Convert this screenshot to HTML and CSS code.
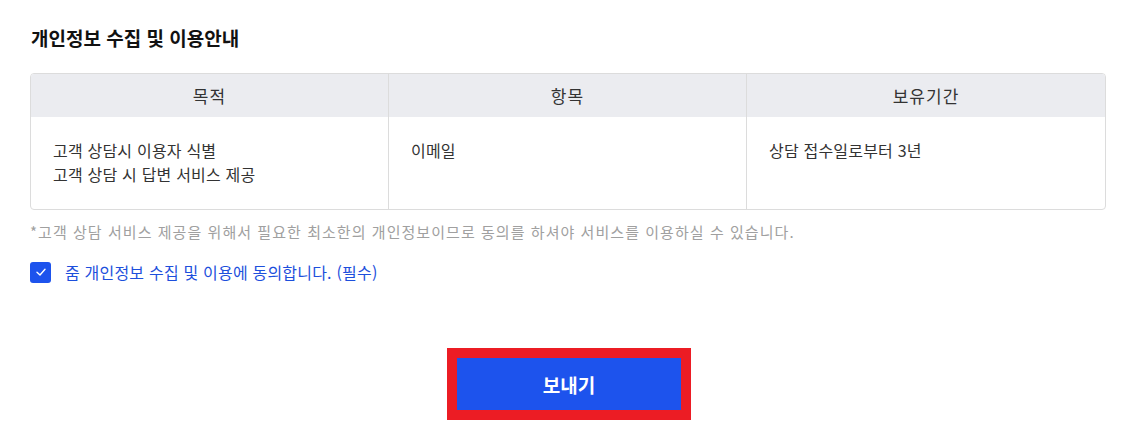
FILE: index.html
```html
<!DOCTYPE html>
<html lang="ko">
<head>
<meta charset="utf-8">
<link rel="stylesheet" href="styles.css">
</head>
<body>
<div class="page">
  <h2 class="title">개인정보 수집 및 이용안내</h2>
  <div class="table">
    <div class="row head">
      <div class="cell">목적</div>
      <div class="cell">항목</div>
      <div class="cell">보유기간</div>
    </div>
    <div class="row body">
      <div class="cell">고객 상담시 이용자 식별<br>고객 상담 시 답변 서비스 제공</div>
      <div class="cell">이메일</div>
      <div class="cell">상담 접수일로부터 3년</div>
    </div>
  </div>
  <p class="note">*고객 상담 서비스 제공을 위해서 필요한 최소한의 개인정보이므로 동의를 하셔야 서비스를 이용하실 수 있습니다.</p>
  <label class="agree">
    <span class="check"><svg width="14" height="14" viewBox="0 0 14 14"><path d="M3 7.2 L6 10 L11 4.2" fill="none" stroke="#fff" stroke-width="1.4" stroke-linecap="round" stroke-linejoin="round"/></svg></span>
    <span class="agree-text">줌 개인정보 수집 및 이용에 동의합니다. (필수)</span>
  </label>
  <div class="actions">
    <button class="submit">보내기</button>
  </div>
</div>
</body>
</html>
```
FILE: styles.css
```css
* { box-sizing: border-box; }
body {
  margin: 0;
  background: #fff;
  font-family: "Noto Sans CJK KR", "Noto Sans", sans-serif;
  color: #222;
}
.page {
  padding: 24px 32px 0 30px;
}
.title {
  margin: 0 0 21px 1px;
  font-size: 19px;
  font-weight: 700;
  line-height: 28px;
  color: #111;
}
.table {
  border: 1px solid #dcdcdc;
  border-radius: 4px;
  overflow: hidden;
}
.row {
  display: grid;
  grid-template-columns: 1fr 1fr 1fr;
}
.head {
  background: #ebecf0;
  height: 43px;
}
.head .cell {
  display: flex;
  align-items: center;
  justify-content: center;
  font-size: 17px;
  letter-spacing: 1px;
  color: #333;
}
.cell:not(:last-child) {
  border-right: 1px solid #dcdcdc;
}
.body .cell {
  padding: 21px 21px 22px 22px;
  font-size: 16px;
  letter-spacing: 0.2px;
  line-height: 24px;
  color: #333;
  height: 92px;
}
.note {
  margin: 10px 0 0 0;
  font-size: 15px;
  letter-spacing: 1.05px;
  line-height: 24px;
  color: #a0a0a0;
  white-space: nowrap;
}
.agree {
  display: flex;
  align-items: center;
  gap: 14px;
  margin-top: 16px;
}
.check {
  width: 21px;
  height: 21px;
  border-radius: 3px;
  background: #1d53ed;
  display: flex;
  align-items: center;
  justify-content: center;
}
.agree-text {
  font-size: 16px;
  letter-spacing: 0.2px;
  color: #1d4fdc;
  line-height: 24px;
}
.actions {
  display: flex;
  justify-content: center;
  margin-top: 64px;
}
.submit {
  width: 244px;
  height: 72px;
  border: 10px solid #ec1c24;
  background: #1d53ed;
  color: #fff;
  font-family: inherit;
  font-size: 19px;
  font-weight: 700;
  padding: 0;
  margin-left: 2px;
}
```
